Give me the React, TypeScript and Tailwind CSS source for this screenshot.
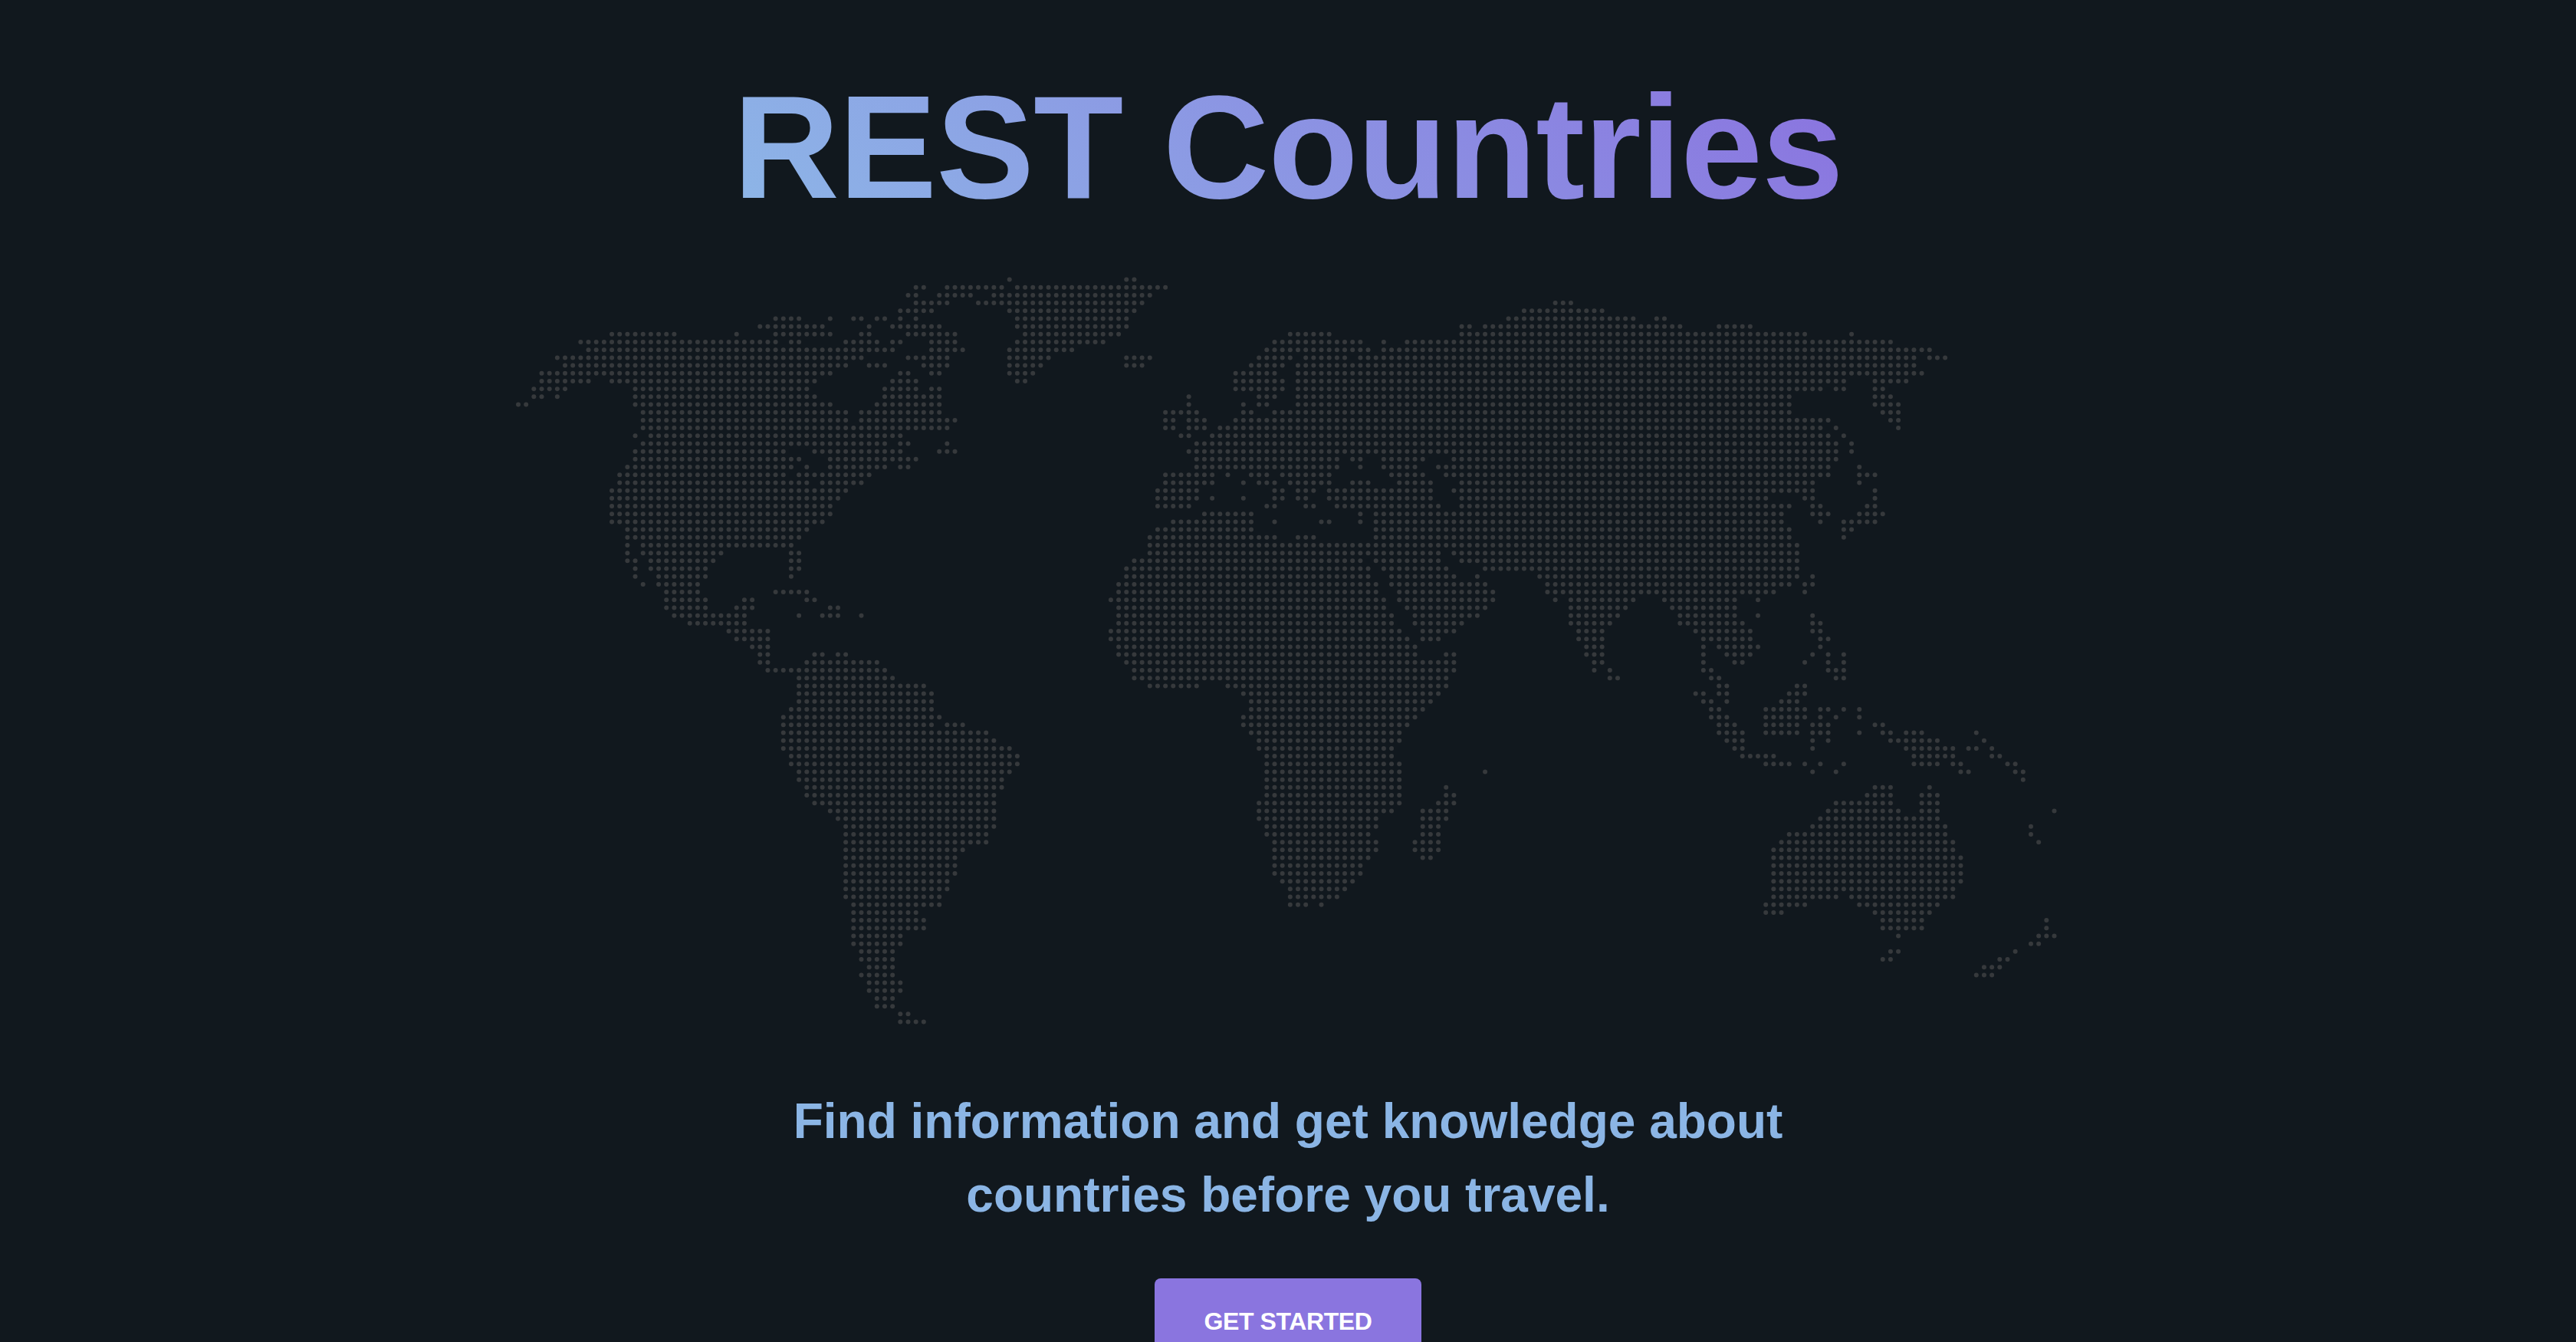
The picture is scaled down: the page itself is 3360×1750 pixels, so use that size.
const MAP_ROWS = [
  "63 78-79",
  "51-52 55-62 64-83",
  "50-51 54-58 61-81",
  "51-55 59-80 133-135",
  "49-53 63-79 129-139",
  "33-36 40 43-44 46-47 49 51 64-78 127-143 146-147",
  "31-39 45 48-54 64-78 121-122 124-149 154-158",
  "12-20 28 33-40 44-45 50-56 65-77 99-104 121-165 171",
  "8-33 35-36 42-46 48-49 53-56 64-75 97-108 111 114-176",
  "9-48 53-57 63-71 96-109 111-181",
  "5-44 50-55 63-68 78-81 95-99 101-106 108-179 181-183",
  "6-42 45-47 52-55 63-67 78-80 94-98 100-179",
  "3-40 49-50 53-54 63-66 92-97 100-180",
  "3-9 12-38 48-51 64-65 92-98 100-170 174-178",
  "2-6 15-37 47-51 53-54 92-98 100-167 169-170 174-175",
  "2-3 5 15-38 47-54 86 95-97 100-163 174-176",
  "0-1 15-40 46-54 86 93 95-96 100-163 174-177",
  "16-42 44-54 83-87 93-94 97-163 175-177",
  "16-42 44-56 83-84 86-88 92-168 176-177",
  "16-55 83-84 86-88 90-167 169 177",
  "15 17-49 85-86 89-168 170",
  "16-47 49-50 55 87-169 171",
  "15-34 38-49 54-56 86-169 171",
  "15-36 40-51 87-105 107-108 111-116 120-169",
  "14-35 37 40-47 49-50 87-105 108 111-115 118-168 172",
  "13-34 36-45 83-89 91 94-96 98-104 112-116 119-168 172-174",
  "13-37 39-44 83-89 93 95-97 99-104 107-109 113-117 121-166 172",
  "12-42 82-87 97-98 100-102 104-117 120-166 174",
  "12-41 82-87 89 93 97-98 100-101 104-117 121-160 165-166 174",
  "12-40 82-86 96-97 101-102 105-118 121-163 166-167 173-174",
  "12-40 88-94 108 110-162 166-168 172-175",
  "12-39 84-94 97 103-104 108 110-162 167 170-174",
  "14-37 82-94 110-163 170-171",
  "14-36 81-97 100-102 110-163 170",
  "14 16-35 81-164",
  "14 16-26 35-36 81-118 120-164",
  "14-15 17-25 35-36 79-108 110-118 121-164",
  "15 17-24 35-36 78-109 111-119 124-164",
  "15 18-24 35 78-109 112-120 123 131-164 166",
  "16 18-23 77-110 112-124 132-163 165-166",
  "19-23 33-37 77-110 113-125 132-161 165",
  "19-24 29-30 37-38 76-111 113-125 133 135-143 147-156 159",
  "19-24 28-30 40-41 77-111 114-124 135-142 148-156",
  "20-29 36 39-41 44 77-112 115-123 135-141 149-156 159 166",
  "22-29 77-112 115-121 135-140 149-157 166-167",
  "27-32 76-113 116-120 136-139 151-158 166-167",
  "28-32 76-114 116-118 136-139 152-158 167-168",
  "30-32 77-115 137-139 152 154-159 167",
  "31-32 38-39 41-42 77-115 119-120 137-139 152 155-158 166 168 170",
  "31-32 37-46 78-120 138-139 152 156-157 165 168 170",
  "32-47 79-120 138 140 152-153 168-170",
  "36-48 79-119 140-141 153-154 169-170",
  "36-52 81-87 91-119 154-155 164-165",
  "36-53 93-118 151-152 154-155 163-165",
  "36-53 94-117 152-153 155 162-164",
  "35-53 94-116 153-154 160-165 167-168 170 172",
  "34-54 93-115 153-155 160-165 167 169 172",
  "34-53 55-57 93-114 154-156 160-164 166-168 174-175",
  "34-60 94-113 154-157 160-164 166-168 172 175-176 178-180 187",
  "34-61 95-113 155-157 166 168 176-182 188",
  "34-63 95-112 156-157 166 178-184 186-187 189",
  "35-64 96-112 157-161 179-184 189-190",
  "35-64 96-113 160-163 165 167 170 179-182 184-185 191-192",
  "36-63 96-113 124 166 169 185-186 192-193",
  "36-62 96-113 193",
  "37-62 96-113 119 174-176 181",
  "37-61 96-113 119-120 173-176 180-182",
  "38-61 95-113 118-120 169-176 180-182",
  "40-61 95-112 116-119 168-177 180-182 197",
  "41-61 95-110 116-119 167-182",
  "42-61 96-110 116-118 166-183 194",
  "42-60 96-109 116-118 163-183 194",
  "42-60 97-110 115-118 162-184 195",
  "42-57 97-110 115-118 161-184",
  "42-56 97-109 116-117 161-185",
  "42-56 97-108 161-185",
  "42-56 97-108 161-185",
  "42-55 98-107 161-185",
  "42-55 99-106 161-184",
  "42-54 99-105 161-169 171-184",
  "43-54 99-101 103 160-165 172-182",
  "43-51 160-162 174-181",
  "43-52 175-180 196",
  "43-52 175-180 196",
  "43-49 177 195-197",
  "43-49 194-195",
  "44-48 176-177 192",
  "44-48 175-176 190-191",
  "45-48 188-190",
  "44-48 187-189",
  "45-49",
  "45-49",
  "46-48",
  "46-48",
  "49-50",
  "49-52",
];

const PITCH_X = 10.17;
const PITCH_Y = 10.19;

function WorldMap() {
  const dots: { x: number; y: number }[] = [];
  MAP_ROWS.forEach((row, r) => {
    row.split(" ").forEach((run) => {
      const [from, to] = run.split("-").map(Number);
      for (let c = from; c <= (to ?? from); c++) {
        dots.push({ x: 6 + c * PITCH_X, y: 4.5 + r * PITCH_Y });
      }
    });
  });

  return (
    <svg width="2020" height="976" viewBox="0 0 2020 976" className="mt-[58px] shrink-0">
      {dots.map((d) => (
        <circle key={`${d.x}-${d.y}`} cx={d.x} cy={d.y} r="3" fill="#36393c" />
      ))}
    </svg>
  );
}

export default function App() {
  return (
    <div className="h-screen overflow-hidden bg-[#11181e] flex flex-col items-center font-['Liberation_Sans',Arial,sans-serif]">
      <h1 className="mt-[82px] text-[192px] leading-[220px] font-bold tracking-[-1px] bg-[linear-gradient(45deg,#8db7e7,#8a72df)] bg-clip-text text-transparent">
        REST Countries
      </h1>
      <WorldMap />
      <p className="mt-[78px] text-[64px] leading-[96px] font-bold text-[#8bb5e5] text-center">
        Find information and get knowledge about
        <br />
        countries before you travel.
      </p>
      <button className="mt-[61px] shrink-0 w-[348px] h-[112px] rounded-lg bg-[#8a75df] text-white text-[32px] font-bold tracking-[-0.4px]">
        GET STARTED
      </button>
    </div>
  );
}
